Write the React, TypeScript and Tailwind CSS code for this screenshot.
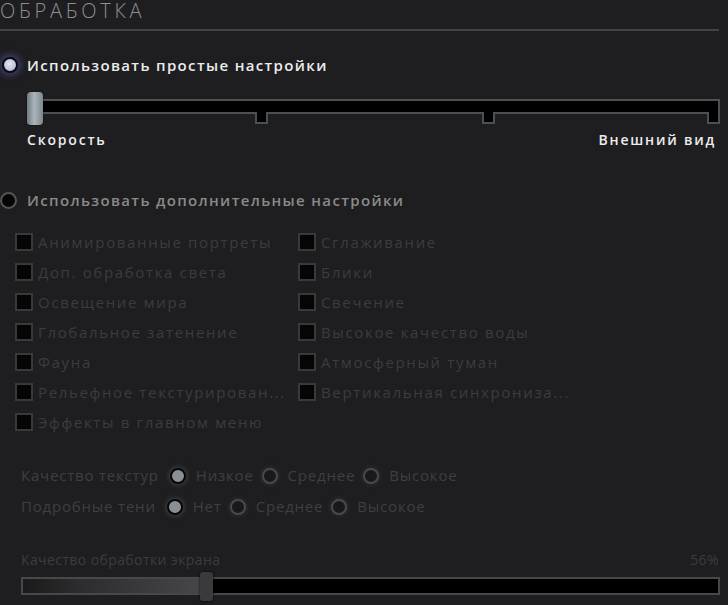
const font = "font-['Open_Sans','DejaVu_Sans',sans-serif]";

const leftChecks = [
  'Анимированные портреты',
  'Доп. обработка света',
  'Освещение мира',
  'Глобальное затенение',
  'Фауна',
  'Рельефное текстурирован...',
  'Эффекты в главном меню',
];

const rightChecks = [
  'Сглаживание',
  'Блики',
  'Свечение',
  'Высокое качество воды',
  'Атмосферный туман',
  'Вертикальная синхрониза...',
];

function Check({ label }: { label: string }) {
  return (
    <div className="flex h-[30px] items-center gap-[5px]">
      <span className="h-[18px] w-[18px] shrink-0 border-2 border-[#38393a] bg-[#050505]" />
      <span className="whitespace-nowrap text-[15px] tracking-[1.65px] text-[#3c3c3e]">{label}</span>
    </div>
  );
}

function Dot({ on }: { on?: boolean }) {
  return on ? (
    <span className="h-[16px] w-[16px] shrink-0 rounded-full border-[2.5px] border-[#060606] bg-[#8a8e95] shadow-[0_0_5px_1px_rgba(140,140,150,0.35)]" />
  ) : (
    <span className="h-[16px] w-[16px] shrink-0 rounded-full border-2 border-[#48494b] bg-[#19191b] shadow-[0_0_4px_1px_rgba(120,120,130,0.2)]" />
  );
}

function OptionRow({ label, options }: { label: string; options: string[] }) {
  return (
    <div className="flex h-[31px] items-center text-[15px] tracking-[0.8px] text-[#3f3f41]">
      <span className="mr-[11px] whitespace-nowrap">{label}</span>
      {options.map((o, i) => (
        <div key={o} className="mr-[8px] flex items-center gap-[10px]">
          <Dot on={i === 0} />
          <span>{o}</span>
        </div>
      ))}
    </div>
  );
}

export default function App() {
  return (
    <div className={`h-[605px] w-[728px] overflow-hidden bg-[#1e1e20] ${font}`}>
      <h1 className="pt-[1px] text-[20px] font-light leading-[20px] tracking-[3.7px] text-[#8b8f90]">ОБРАБОТКА</h1>
      <div className="mt-[8px] h-[2px] w-[719px] bg-[#3f4345]" />

      {/* простые настройки */}
      <div className="mt-[24px] flex h-[20px] items-center gap-[9px] pl-[2px]">
        <span className="h-[16px] w-[16px] rounded-full border-2 border-[#0b0b14] bg-[radial-gradient(circle_at_45%_40%,#e4e7f2,#a6adc8)] shadow-[0_0_7px_2px_rgba(100,100,210,0.55)]" />
        <span className="text-[15px] font-semibold tracking-[1.35px] text-[#ececec]">Использовать простые настройки</span>
      </div>

      <div className="relative ml-[27px] mt-[17px] h-[33px] w-[693px]">
        <div className="absolute left-0 right-0 top-[7px] h-[15px] border-2 border-[#4a5053] bg-black" />
        {[0, 228, 455, 680].map((x) => (
          <div
            key={x}
            className="absolute top-[20px] h-[12px] w-[13px] border-x-2 border-b-2 border-[#4a5053] bg-black"
            style={{ left: x }}
          />
        ))}
        <div className="absolute left-0 top-0 h-[33px] w-[16px] rounded-[4px] bg-[linear-gradient(90deg,#6f7b82,#a9b4bb_45%,#7d888e)] shadow-[0_0_2px_rgba(0,0,0,0.6)]" />
      </div>

      <div className="mt-[5px] flex h-[18px] items-center justify-between pl-[27px] pr-[12px] text-[14px] font-semibold tracking-[1.8px] text-[#ececec]">
        <span>Скорость</span>
        <span>Внешний вид</span>
      </div>

      {/* дополнительные настройки */}
      <div className="mt-[42px] flex h-[20px] items-center gap-[10px]">
        <span className="h-[17px] w-[17px] rounded-full border-2 border-[#545556] bg-[#060606]" />
        <span className="text-[15px] font-semibold tracking-[1.35px] text-[#8a8a8a]">
          Использовать дополнительные настройки
        </span>
      </div>

      <div className="mt-[17px] grid grid-cols-[283px_1fr] pl-[15px]">
        <div className="flex flex-col">
          {leftChecks.map((c) => (
            <Check key={c} label={c} />
          ))}
        </div>
        <div className="flex flex-col">
          {rightChecks.map((c) => (
            <Check key={c} label={c} />
          ))}
        </div>
      </div>

      <div className="mt-[23px] flex flex-col pl-[21px]">
        <OptionRow label="Качество текстур" options={['Низкое', 'Среднее', 'Высокое']} />
        <OptionRow label="Подробные тени" options={['Нет', 'Среднее', 'Высокое']} />
      </div>

      <div className="mt-[27px] flex items-center justify-between pl-[21px] pr-[9px] text-[14px] tracking-[0.4px] text-[#3c3c3e]">
        <span>Качество обработки экрана</span>
        <span>56%</span>
      </div>

      <div className="relative ml-[21px] mt-[2px] h-[29px] w-[699px]">
        <div className="absolute left-0 right-0 top-[5px] h-[18px] border-2 border-[#46494b] bg-black">
          <div className="h-full w-[182px] bg-[linear-gradient(90deg,#1a1a1a,#2c2c2e_30%,#474749)]" />
        </div>
        <div className="absolute left-[179px] top-0 h-[29px] w-[13px] rounded-[3px] bg-[#3a3a3c] shadow-[0_0_3px_rgba(0,0,0,0.8)]" />
      </div>
    </div>
  );
}
